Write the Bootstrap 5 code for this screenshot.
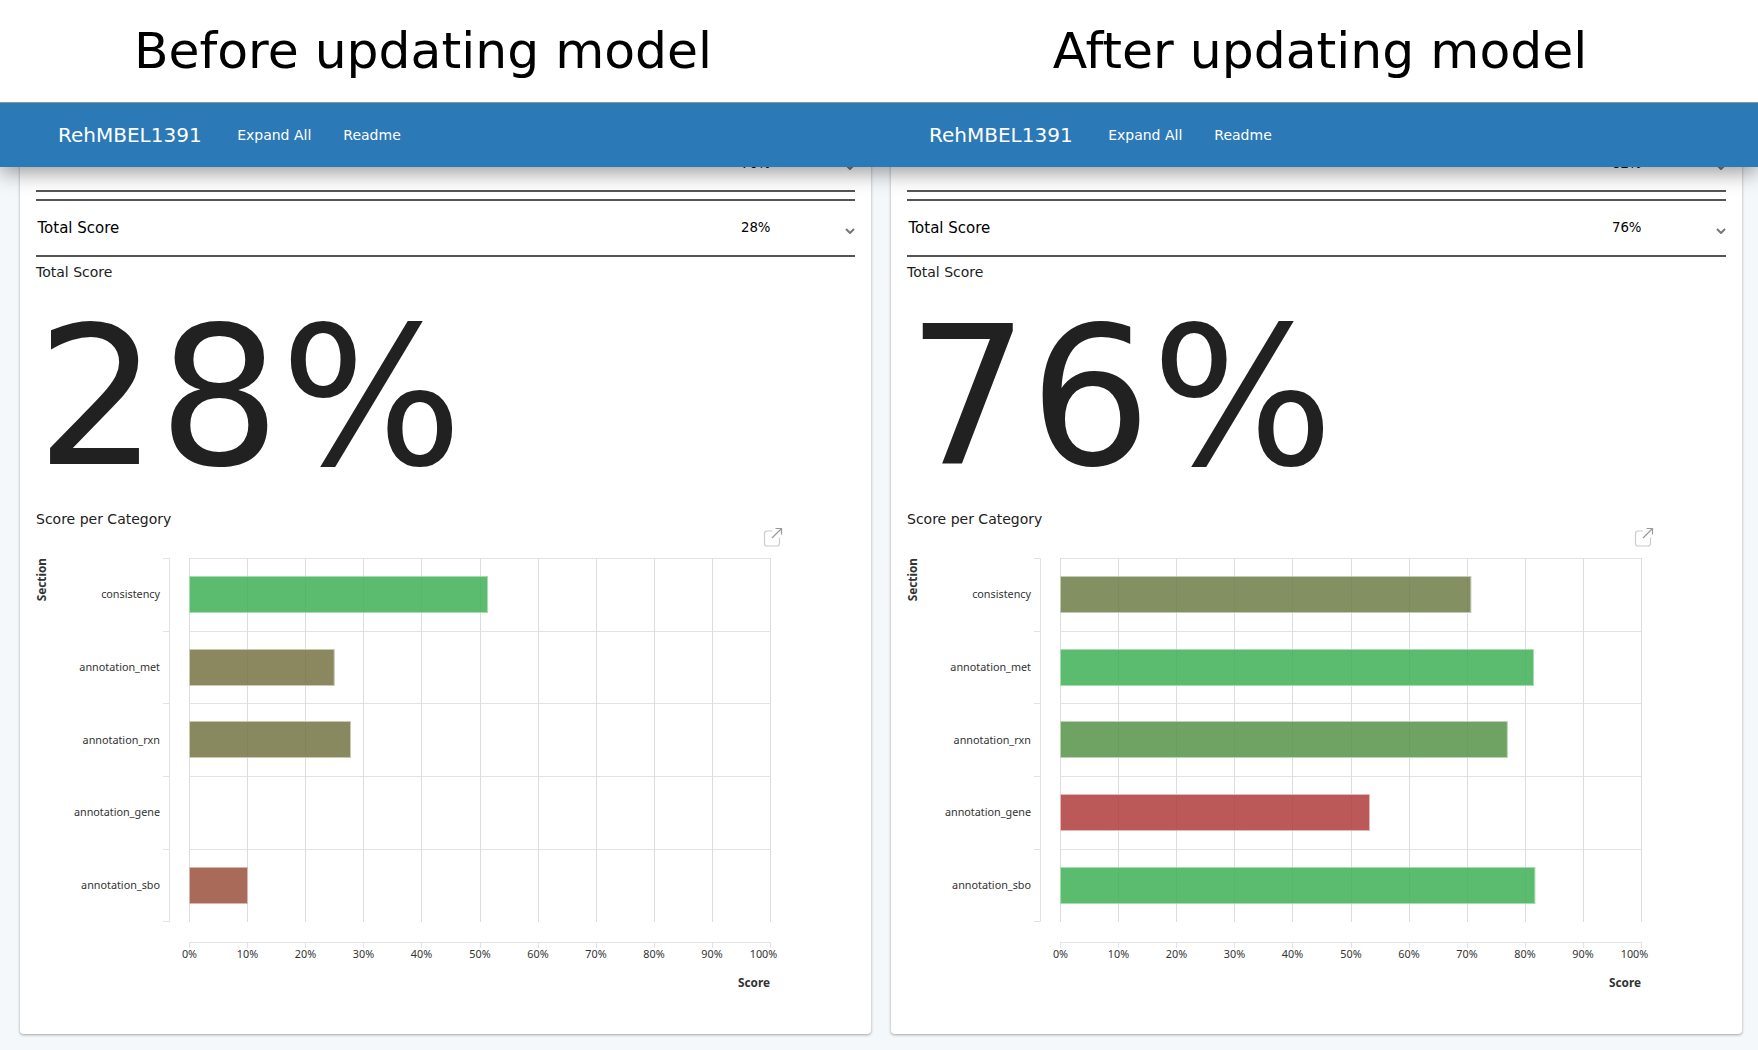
<!DOCTYPE html>
<html lang="en">
<head>
<meta charset="utf-8">
<title>Before and after updating model</title>
<link href="https://cdn.jsdelivr.net/npm/bootstrap@5.3.0/dist/css/bootstrap.min.css" rel="stylesheet">
<style>
html,body{height:1050px;overflow:hidden}
body{background:#f5f8fb;font-family:"DejaVu Sans",sans-serif;color:#212121}
.cap-band{height:102px;background:#fff}
.cap-a{width:846px}
.cap-b{flex:1;padding-left:36px}
.cap-text{font-size:50.400px;font-weight:400;color:#000;line-height:102px;margin:0;text-align:center}
.topbar{height:65px;background:#2b79b6;border-top:1px solid #8f979d;padding:0;box-shadow:0 5px 20px rgba(0,0,0,.42);clip-path:inset(0 0 -40px 0)}
.bar-half{width:871px;padding-left:58px;flex:none}
.brand-t{font-size:20px;color:#fff;margin-right:35.500px;padding:0}
.brand-t:hover{color:#fff}
.bar-link{font-size:14px;color:#fff;text-decoration:none;margin-right:32px}
.panels{margin-top:-32px}
.pane{width:871px;flex:none;padding-left:20px}
.sheet{width:851px;height:899px;background:#fff;border-radius:0 0 4px 4px;box-shadow:0 1px 3px rgba(0,0,0,.35);padding:0 16px;border:0}
.score-line{height:56px;border-bottom:2px solid #555;padding:0 0 0 1.500px}
.score-first{height:57px;padding-top:2px}
.gap-line{height:9px;border-bottom:2px solid #555}
.line-name{font-size:15px;color:#000;flex:1}
.line-val{font-size:13.300px;color:#000;width:60px;margin-right:74.500px;text-align:right}
.chev{width:10px;height:6px;margin-top:6px;flex:none}
.sub-h{font-size:14px;color:#212121;line-height:20px;margin:0}
.sub-top{padding-top:5px}
.huge{font-size:192px;line-height:224px;height:224px;margin:4px 0 0 0;color:#212121}
.sub-cat{margin-top:-1px}
.plot{display:block;margin:-4px 0 0 -8px}
.plot text{font-family:"Noto Sans",sans-serif;fill:#333}
.tk{font-size:10.800px}
.ttl{font-size:11.800px;font-weight:700}
.gr{stroke:#e2e2e9;stroke-width:1;fill:none}
.gv{stroke:#dcdce3;stroke-width:1}
.bar{stroke-width:1;fill-opacity:.85}
.b-green{fill:#3eaf55;stroke:#a6dcb0}
.b-olive{fill:#777243;stroke:#c9c8b2}
.b-olive2{fill:#737443;stroke:#c8c9b0}
.b-brown{fill:#9a503d;stroke:#d6b7ae}
.b-moss{fill:#6c7c47;stroke:#c3cbb5}
.b-fern{fill:#559349;stroke:#bbd3b2}
.b-red{fill:#af3b3b;stroke:#e3b8b8}
.ic-box{fill:none;stroke:#ccc;stroke-width:1.2}
.ic-arr{fill:none;stroke:#999;stroke-width:1.2}
</style>
</head>
<body>
<div class="cap-band d-flex">
  <div class="cap-a"><h1 class="cap-text">Before updating model</h1></div>
  <div class="cap-b"><h1 class="cap-text">After updating model</h1></div>
</div>
<nav class="navbar sticky-top topbar flex-nowrap">
  <div class="d-flex w-100 justify-content-start">
    <div class="bar-half d-flex align-items-center">
      <a class="navbar-brand brand-t" href="#">RehMBEL1391</a>
      <a class="bar-link" href="#">Expand All</a>
      <a class="bar-link" href="#">Readme</a>
    </div>
    <div class="bar-half d-flex align-items-center">
      <a class="navbar-brand brand-t" href="#">RehMBEL1391</a>
      <a class="bar-link" href="#">Expand All</a>
      <a class="bar-link" href="#">Readme</a>
    </div>
  </div>
</nav>
<div class="panels d-flex">
  <div class="pane">
    <div class="card sheet">
      <div class="score-line score-first d-flex align-items-center"><span class="line-name"></span><span class="line-val">70%</span><svg class="chev" viewBox="0 0 10 6"><path d="M1 1l4 4 4-4" fill="none" stroke="#777" stroke-width="2"/></svg></div>
      <div class="gap-line"></div>
      <div class="score-line d-flex align-items-center"><span class="line-name">Total Score</span><span class="line-val">28%</span><svg class="chev" viewBox="0 0 10 6"><path d="M1 1l4 4 4-4" fill="none" stroke="#777" stroke-width="2"/></svg></div>
      <p class="sub-h sub-top">Total Score</p>
      <div class="huge">28%</div>
      <p class="sub-h sub-cat">Score per Category</p>
      <svg class="plot" width="768" height="480" viewBox="28 525 768 480">
        <path class="ic-box" d="M772 531h-5a2.500 2.500 0 0 0-2.500 2.500v10a2.500 2.500 0 0 0 2.500 2.500h10a2.500 2.500 0 0 0 2.500-2.500v-6"/>
        <path class="ic-arr" d="M772 538l9.500-9.500M775.500 528.500h6v6"/>
        <path class="gr" d="M163 558.500h6.500M163 631.500h6.500M163 703.500h6.500M163 776.500h6.500M163 849.500h6.500M163 921.500h6.500M169.500 558v364"/>
        <path class="gr" d="M189 558.500h582M189 631.500h582M189 703.500h582M189 776.500h582M189 849.500h582"/>
        <path class="gv" d="M189.500 558v364M247.500 558v364M305.500 558v364M363.500 558v364M421.500 558v364M480.500 558v364M538.500 558v364M596.500 558v364M654.500 558v364M712.500 558v364M770.500 558v364"/>
        <path class="gr" d="M189 942.500h582M189.500 942v6M247.500 942v6M305.500 942v6M363.500 942v6M421.500 942v6M480.500 942v6M538.500 942v6M596.500 942v6M654.500 942v6M712.500 942v6M770.500 942v6"/>
        <rect class="bar b-green" x="189.500" y="576.500" width="298" height="36"/>
        <rect class="bar b-olive" x="189.500" y="649.500" width="144.700" height="36"/>
        <rect class="bar b-olive2" x="189.500" y="721.500" width="161" height="36"/>
        <rect class="bar b-brown" x="189.500" y="867.500" width="58" height="36"/>
        <g class="tk" text-anchor="end">
          <text x="160" y="597.500">consistency</text><text x="160" y="670.500">annotation_met</text><text x="160" y="743.500">annotation_rxn</text><text x="160" y="815.500">annotation_gene</text><text x="160" y="888.500">annotation_sbo</text>
        </g>
        <g class="tk" text-anchor="middle">
          <text x="189.500" y="958">0%</text><text x="247.500" y="958">10%</text><text x="305.500" y="958">20%</text><text x="363.500" y="958">30%</text><text x="421.500" y="958">40%</text><text x="480" y="958">50%</text><text x="538" y="958">60%</text><text x="596" y="958">70%</text><text x="654" y="958">80%</text><text x="712" y="958">90%</text><text x="763.500" y="958">100%</text>
        </g>
        <text class="ttl" x="770" y="987" text-anchor="end">Score</text>
        <text class="ttl" transform="translate(46,558) rotate(-90)" text-anchor="end">Section</text>
      </svg>
    </div>
  </div>
  <div class="pane">
    <div class="card sheet">
      <div class="score-line score-first d-flex align-items-center"><span class="line-name"></span><span class="line-val">82%</span><svg class="chev" viewBox="0 0 10 6"><path d="M1 1l4 4 4-4" fill="none" stroke="#777" stroke-width="2"/></svg></div>
      <div class="gap-line"></div>
      <div class="score-line d-flex align-items-center"><span class="line-name">Total Score</span><span class="line-val">76%</span><svg class="chev" viewBox="0 0 10 6"><path d="M1 1l4 4 4-4" fill="none" stroke="#777" stroke-width="2"/></svg></div>
      <p class="sub-h sub-top">Total Score</p>
      <div class="huge">76%</div>
      <p class="sub-h sub-cat">Score per Category</p>
      <svg class="plot" width="768" height="480" viewBox="28 525 768 480">
        <path class="ic-box" d="M772 531h-5a2.500 2.500 0 0 0-2.500 2.500v10a2.500 2.500 0 0 0 2.500 2.500h10a2.500 2.500 0 0 0 2.500-2.500v-6"/>
        <path class="ic-arr" d="M772 538l9.500-9.500M775.500 528.500h6v6"/>
        <path class="gr" d="M163 558.500h6.500M163 631.500h6.500M163 703.500h6.500M163 776.500h6.500M163 849.500h6.500M163 921.500h6.500M169.500 558v364"/>
        <path class="gr" d="M189 558.500h582M189 631.500h582M189 703.500h582M189 776.500h582M189 849.500h582"/>
        <path class="gv" d="M189.500 558v364M247.500 558v364M305.500 558v364M363.500 558v364M421.500 558v364M480.500 558v364M538.500 558v364M596.500 558v364M654.500 558v364M712.500 558v364M770.500 558v364"/>
        <path class="gr" d="M189 942.500h582M189.500 942v6M247.500 942v6M305.500 942v6M363.500 942v6M421.500 942v6M480.500 942v6M538.500 942v6M596.500 942v6M654.500 942v6M712.500 942v6M770.500 942v6"/>
        <rect class="bar b-moss" x="189.500" y="576.500" width="410.400" height="36"/>
        <rect class="bar b-green" x="189.500" y="649.500" width="473" height="36"/>
        <rect class="bar b-fern" x="189.500" y="721.500" width="446.800" height="36"/>
        <rect class="bar b-red" x="189.500" y="794.500" width="309" height="36"/>
        <rect class="bar b-green" x="189.500" y="867.500" width="474.400" height="36"/>
        <g class="tk" text-anchor="end">
          <text x="160" y="597.500">consistency</text><text x="160" y="670.500">annotation_met</text><text x="160" y="743.500">annotation_rxn</text><text x="160" y="815.500">annotation_gene</text><text x="160" y="888.500">annotation_sbo</text>
        </g>
        <g class="tk" text-anchor="middle">
          <text x="189.500" y="958">0%</text><text x="247.500" y="958">10%</text><text x="305.500" y="958">20%</text><text x="363.500" y="958">30%</text><text x="421.500" y="958">40%</text><text x="480" y="958">50%</text><text x="538" y="958">60%</text><text x="596" y="958">70%</text><text x="654" y="958">80%</text><text x="712" y="958">90%</text><text x="763.500" y="958">100%</text>
        </g>
        <text class="ttl" x="770" y="987" text-anchor="end">Score</text>
        <text class="ttl" transform="translate(46,558) rotate(-90)" text-anchor="end">Section</text>
      </svg>
    </div>
  </div>
</div>
<script src="https://cdn.jsdelivr.net/npm/bootstrap@5.3.0/dist/js/bootstrap.bundle.min.js"></script>
</body>
</html>
